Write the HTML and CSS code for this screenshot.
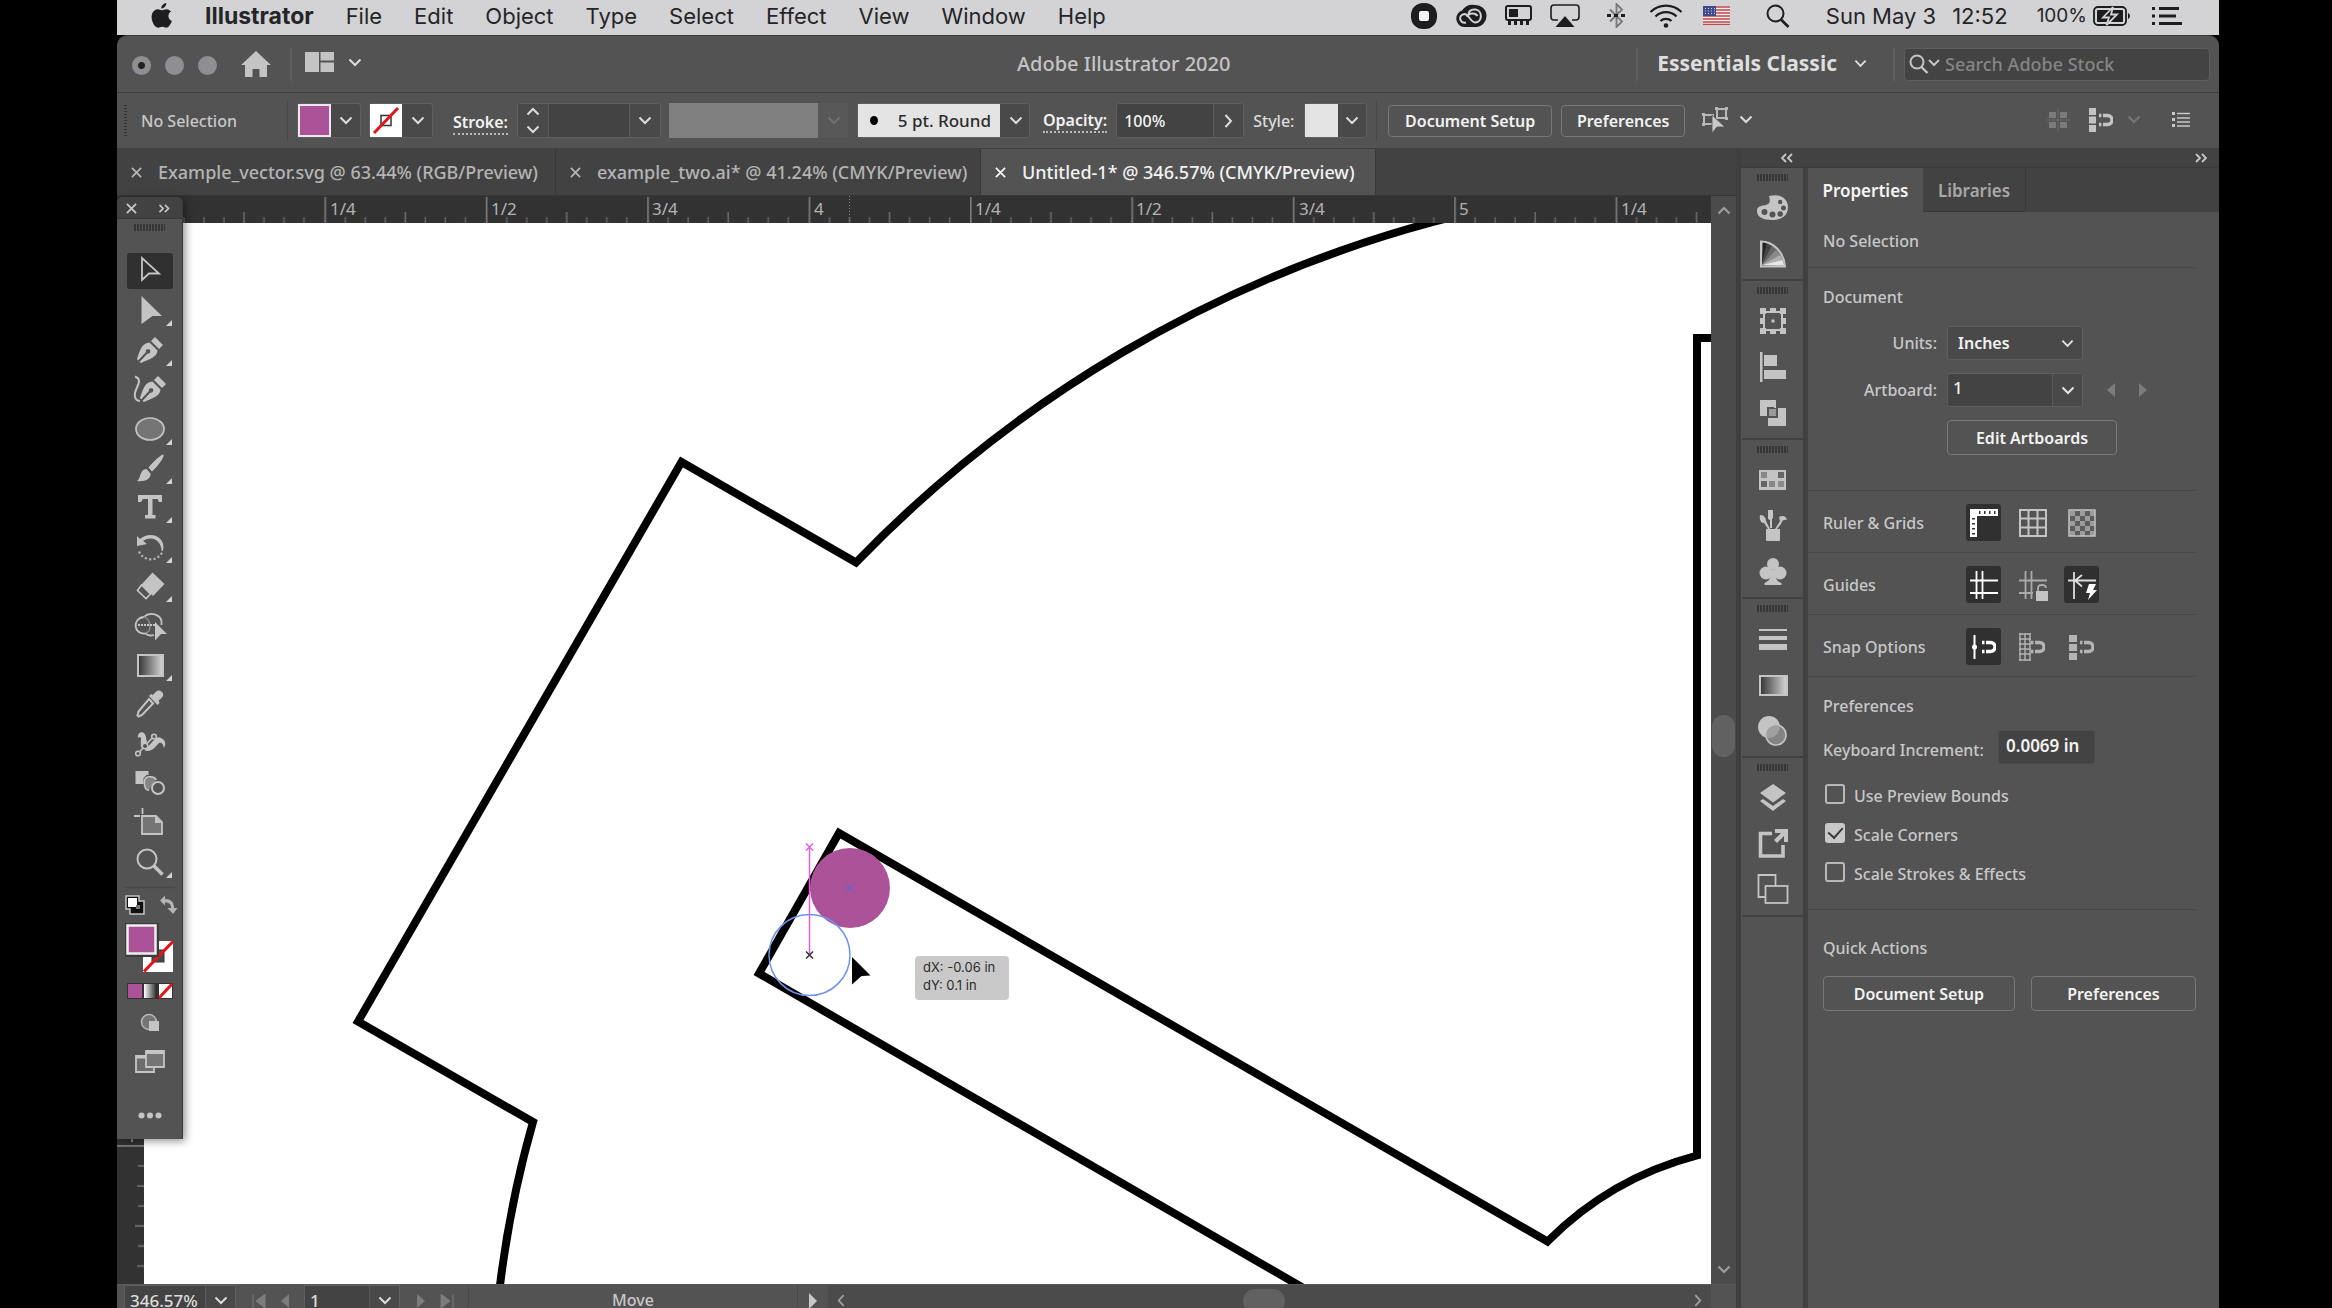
FILE: index.html
```html
<!DOCTYPE html>
<html lang="en">
<head>
<meta charset="utf-8">
<meta name="viewport" content="width=device-width, initial-scale=1">
<title>Adobe Illustrator 2020</title>
<link rel="stylesheet" href="styles.css">
</head>
<body>
<svg class="defs" aria-hidden="true">
  <defs>
    <symbol id="down" viewBox="0 0 14 9"><path d="M1.5 1.5 7 7l5.500-5.500" fill="none" stroke="currentColor" stroke-width="2"/></symbol>
    <symbol id="up" viewBox="0 0 14 9"><path d="M1.500 7.500 7 2l5.500 5.500" fill="none" stroke="currentColor" stroke-width="2"/></symbol>
    <symbol id="right" viewBox="0 0 9 14"><path d="M1.500 1 7 7l-5.500 6" fill="none" stroke="currentColor" stroke-width="2"/></symbol>
    <symbol id="left" viewBox="0 0 9 14"><path d="M7.500 1 2 7l5.500 6" fill="none" stroke="currentColor" stroke-width="2"/></symbol>
    <symbol id="close" viewBox="0 0 12 12"><path d="M1 1l10 10M11 1 1 11" fill="none" stroke="currentColor" stroke-width="2"/></symbol>
    <symbol id="dright" viewBox="0 0 12 10"><path d="M1 1l4 4-4 4M7 1l4 4-4 4" fill="none" stroke="currentColor" stroke-width="1.800"/></symbol>
    <symbol id="dleft" viewBox="0 0 12 10"><path d="M5 1 1 5l4 4M11 1 7 5l4 4" fill="none" stroke="currentColor" stroke-width="1.800"/></symbol>
    <symbol id="corner" viewBox="0 0 6 6"><path d="M6 0v6H0z" fill="currentColor"/></symbol>
    <symbol id="magnet" viewBox="0 0 14 14"><path d="M4 2.500h4.500a4.500 4.500 0 0 1 0 9H4" fill="none" stroke="currentColor" stroke-width="3.400"/><path d="M0 .8h2.500v3.400H0zM0 9.800h2.500v3.400H0z" fill="currentColor"/></symbol>
    <linearGradient id="ramp"><stop offset="0" stop-color="#333"/><stop offset="1" stop-color="#d8d8d8"/></linearGradient>
    <linearGradient id="rampBack"><stop offset="0" stop-color="#fff"/><stop offset="1" stop-color="#222"/></linearGradient>
  </defs>
</svg>

<div class="desktop">
  <header class="menubar">
    <nav class="menus" aria-label="Application menu">
      <button class="apple" aria-label="Apple menu"><svg width="22" height="26" viewBox="0 0 22 26"><path fill="#1d1d1f" d="M15.300 0c.2 2.800-2.500 5.600-5 5.500C10.100 2.800 12.700.3 15.300 0zM11 7.300c1.200 0 2.600-1.200 4.700-1.100 1.700.1 3.400.9 4.300 2.400-4 2.600-3 7.900.9 9.500-1 2.900-3.100 6.500-5.300 6.600-1.700 0-2.200-1-4.300-1s-2.700 1-4.300 1C3.600 24.600.6 18.700.6 14.100.6 9.200 3.700 6.300 6.800 6.200c1.800 0 3.100 1.100 4.200 1.100z"/></svg></button>
      <button class="app-name">Illustrator</button>
      <button>File</button><button>Edit</button><button>Object</button><button>Type</button><button>Select</button><button>Effect</button><button>View</button><button>Window</button><button>Help</button>
    </nav>
    <div class="status-items">
      <svg width="26" height="26" viewBox="0 0 26 26"><rect x="0" y="0" width="26" height="26" rx="12" fill="#1d1d1f"/><rect x="8" y="8" width="10" height="10" rx="2" fill="#f2f2f4"/></svg>
      <svg width="32" height="24" viewBox="0 0 32 24"><path fill="#1d1d1f" d="M20 1a11 11 0 0 1 1 22H9A8.500 8.500 0 0 1 7 6.500 13 13 0 0 1 20 1z"/><path d="M11 18.500c-7 1.500-8-8-1.500-8.500 4 0 6 8 10.500 8.500 7.500 0 8-12 .5-13C15 5 13 8 13.500 11M12 13c2-5 9-4 10.500-1" fill="none" stroke="#d3d3d6" stroke-width="2"/></svg>
      <svg width="27" height="21" viewBox="0 0 27 21"><rect x="1" y="1" width="25" height="14" rx="2" fill="none" stroke="#1d1d1f" stroke-width="2"/><path d="M4 4h9v8H4zM3 16h3v4H3zM9 16h3v4H9zM15 16h3v4h-3zM21 16h3v4h-3z" fill="#1d1d1f"/></svg>
      <svg width="30" height="24" viewBox="0 0 30 24"><path d="M8 16H4a3 3 0 0 1-3-3V4a3 3 0 0 1 3-3h22a3 3 0 0 1 3 3v9a3 3 0 0 1-3 3h-4" fill="none" stroke="#1d1d1f" stroke-width="1.600"/><path d="M15 12l9.500 11h-19z" fill="#1d1d1f"/></svg>
      <svg class="bt" width="18" height="25" viewBox="0 0 18 25"><path d="M3 6.500l12 12L9.500 24V1L15 6.500l-12 12" fill="none" stroke="#77777b" stroke-width="1.800"/><path d="M0 11h4v3H0zM7 11h4v3H7zM14 11h4v3h-4z" fill="#1d1d1f"/></svg>
      <svg class="wifi" width="34" height="24" viewBox="0 0 34 24"><g fill="none" stroke="#1d1d1f" stroke-width="2.200"><path d="M1.500 8a22 22 0 0 1 31 0M6.500 12.500a15 15 0 0 1 21 0M11.500 17a8 8 0 0 1 11 0"/></g><circle cx="17" cy="21.500" r="2.300" fill="#1d1d1f"/></svg>
      <svg class="flag" width="27" height="19" viewBox="0 0 27 19"><path fill="#f3eeee" d="M0 0h27v19H0z"/><path d="M0 1h27M0 4h27M0 7h27M0 10h27M0 13h27M0 16h27M0 18.500h27" stroke="#c0474c" stroke-width="1.500"/><path fill="#3f4a86" d="M0 0h13v10H0z"/><path d="M2 2.500h10M2 5h10M2 7.500h10" stroke="#c9cde2" stroke-dasharray="1 2"/></svg>
      <svg class="spot" width="24" height="24" viewBox="0 0 24 24"><circle cx="9.500" cy="9.500" r="8" fill="none" stroke="#1d1d1f" stroke-width="2"/><path d="M15 15.500l7.500 7.500" stroke="#1d1d1f" stroke-width="2.600"/></svg>
      <time class="clock"><span>Sun May 3</span><span>12:52</span></time>
      <span class="charge">100%</span>
      <svg class="battery" width="38" height="20" viewBox="0 0 38 20"><rect x="1" y="1" width="32" height="18" rx="4" fill="none" stroke="#1d1d1f" stroke-width="1.800"/><rect x="4" y="4" width="26" height="12" rx="1" fill="#1d1d1f"/><path d="M35 7c2.500.5 2.500 5.500 0 6z" fill="#1d1d1f"/><path d="M20 1l-10 10.500h6L13.500 19 24 8.500h-6z" fill="#1d1d1f" stroke="#d3d3d6" stroke-width="1.800"/></svg>
      <svg width="30" height="20" viewBox="0 0 30 20"><path d="M7 2.500h20M7 10h17M7 17.500h23" stroke="#1d1d1f" stroke-width="2.800"/><path d="M0 2.500h3M0 10h3M0 17.500h3" stroke="#1d1d1f" stroke-width="2.800"/></svg>
    </div>
  </header>

  <main class="window">
    <div class="titlebar">
      <div class="lights"><i class="edited"></i><i></i><i></i></div>
      <button class="home" aria-label="Home"><svg width="30" height="26" viewBox="0 0 30 26"><path d="M15 0l15 14h-4v12h-7.500v-8h-7v8H4V14H0z" fill="#c4c4c4"/></svg></button>
      <i class="rule"></i>
      <button class="arrange" aria-label="Arrange documents"><svg width="29" height="20" viewBox="0 0 29 20"><path d="M0 0h14v20H0zM15.500 0H29v8.500H15.500zM15.500 10.500H29V20H15.500z" fill="#c4c4c4"/></svg><svg width="14" height="9"><use href="#down"/></svg></button>
      <h1>Adobe Illustrator 2020</h1>
      <div class="title-right">
        <i class="rule"></i>
        <button class="workspace">Essentials Classic<svg width="13" height="9"><use href="#down"/></svg></button>
        <i class="rule"></i>
        <label class="stock"><svg width="31" height="20" viewBox="0 0 31 20"><circle cx="8" cy="8" r="6.500" fill="none" stroke="#c4c4c4" stroke-width="2"/><path d="M12.500 13l6 6" stroke="#c4c4c4" stroke-width="2.400"/><path d="M20 6l5 5 5-5" fill="none" stroke="#c4c4c4" stroke-width="2"/></svg><input type="text" placeholder="Search Adobe Stock" aria-label="Search Adobe Stock"></label>
      </div>
    </div>

    <div class="controlbar">
      <i class="vgrip"></i>
      <span class="sel-state">No Selection</span>
      <i class="rule dark"></i>
      <button class="swatch fill-swatch" aria-label="Fill"><i></i><svg width="14" height="9"><use href="#down"/></svg></button>
      <button class="swatch stroke-swatch" aria-label="Stroke color"><svg width="32" height="33" viewBox="0 0 32 33"><path fill="#fff" d="M0 0h32v33H0z"/><rect x="11" y="11.500" width="10" height="10" fill="none" stroke="#333" stroke-width="1.500"/><path d="M4 29L28 4" stroke="#e0161b" stroke-width="3"/></svg><svg width="14" height="9"><use href="#down"/></svg></button>
      <label class="link-label stroke-label" for="stroke-w">Stroke:</label>
      <div class="spinner"><button aria-label="Step"><svg width="14" height="9"><use href="#up"/></svg><svg width="14" height="9"><use href="#down"/></svg></button><input id="stroke-w" type="text"><button aria-label="Stroke presets"><svg width="14" height="9"><use href="#down"/></svg></button></div>
      <button class="profile" aria-label="Variable width profile" disabled><i></i><svg width="14" height="9"><use href="#down"/></svg></button>
      <button class="brush"><span>5 pt. Round</span><svg width="14" height="9"><use href="#down"/></svg></button>
      <label class="link-label opacity-label" for="opacity">Opacity:</label>
      <div class="opacity"><input id="opacity" type="text" value="100%"><button aria-label="Opacity slider"><svg width="9" height="14"><use href="#right"/></svg></button></div>
      <span class="style-label">Style:</span>
      <button class="swatch style-swatch" aria-label="Graphic style"><i></i><svg width="14" height="9"><use href="#down"/></svg></button>
      <i class="rule dark style-rule"></i>
      <button class="btn bar-btn">Document Setup</button>
      <button class="btn bar-btn prefs">Preferences</button>
      <button class="similar" aria-label="Select similar"><svg width="27" height="27" viewBox="0 0 27 27"><g fill="none" stroke="#b8b8b8" stroke-width="2"><path d="M15 3h9v9h-9zM2 9h9v9H2z"/></g><path d="M13 1h3v3h-3zM23 1h3v3h-3zM23 11h3v3h-3zM0 7h3v3H0zM0 17h3v3H0z" fill="#b8b8b8"/><path d="M10 9l13 12h-8l-5 6z" fill="#c8c8c8" stroke="#535353" stroke-width=".8"/></svg><svg width="14" height="9"><use href="#down"/></svg></button>
      <div class="bar-end">
        <svg width="24" height="24" viewBox="0 0 24 24"><path d="M3 4h7v6H3zM14 4h7v6h-7zM3 14h7v6H3zM14 14h7v6h-7z" fill="#7b7b7b"/><path d="M12 0v24M0 12h24" stroke="#6b6b6b"/></svg>
        <svg width="24" height="24" viewBox="0 0 24 24"><path d="M0 0h7v7H0zM0 8.500h7v7H0zM0 17h7v7H0z" fill="#c4c4c4"/><use href="#magnet" x="10" y="5" width="14" height="14" color="#c4c4c4"/></svg>
        <svg class="dim" width="14" height="9"><use href="#down"/></svg>
        <svg class="list-ic" width="18" height="15" viewBox="0 0 18 15"><path d="M5 1.500h13M5 6h13M5 10h13M5 14h13" stroke="#c8c8c8" stroke-width="1.600"/><path d="M0 0h3v3H0zM0 6h3v3H0zM0 12h3v3H0z" fill="#c8c8c8"/></svg>
      </div>
    </div>

    <div class="workarea">
      <section class="document">
        <div class="tabs">
          <button class="tab t1"><svg width="11" height="11"><use href="#close"/></svg>Example_vector.svg @ 63.44% (RGB/Preview)</button>
          <button class="tab t2"><svg width="11" height="11"><use href="#close"/></svg>example_two.ai* @ 41.24% (CMYK/Preview)</button>
          <button class="tab t3 active"><svg width="11" height="11"><use href="#close"/></svg>Untitled-1* @ 346.57% (CMYK/Preview)</button>
        </div>
        <div class="stage">
          <div class="sheet">
            <svg class="hruler" width="100%" height="27">
              <defs><pattern id="hticks" x="46" width="161.400" height="27" patternUnits="userSpaceOnUse"><path d="M.8 1v26" stroke="#7c7c7c" stroke-width="1.600"/><path d="M21 21v6M41 21v6M61 21v6M101 21v6M121 21v6M141 21v6" stroke="#626262" stroke-width="1.500"/><path d="M81 16v11" stroke="#6c6c6c" stroke-width="1.500"/></pattern></defs>
              <rect width="100%" height="27" fill="url(#hticks)"/>
              <path d="M732.500 0v27" stroke="#8a8a8a" stroke-dasharray="1 2"/>
              <g><text x="213" y="19">1/4</text><text x="374" y="19">1/2</text><text x="535" y="19">3/4</text><text x="697" y="19">4</text><text x="858" y="19">1/4</text><text x="1019" y="19">1/2</text><text x="1182" y="19">3/4</text><text x="1342" y="19">5</text><text x="1504" y="19">1/4</text></g>
            </svg>
            <svg class="vruler" width="27" height="100%">
              <defs><pattern id="vticks" y="115" width="27" height="161.400" patternUnits="userSpaceOnUse"><path d="M0 .8h27" stroke="#7c7c7c" stroke-width="2"/><path d="M21 21h6M20 41h7M21 61h6M21 101h6M20 121h7M21 141h6" stroke="#727272" stroke-width="1.500"/><path d="M18 81h9" stroke="#7c7c7c" stroke-width="1.500"/></pattern></defs>
              <rect width="27" height="100%" fill="url(#vticks)"/>
              <path d="M15 912v7" stroke="#aaa" stroke-width="1.500"/>
            </svg>
            <svg class="artboard" width="100%" height="100%">
              <g transform="translate(-144 -223)">
                <g fill="none" stroke="#000" stroke-width="8">
                  <path d="M1483 209l-50 13A1256 1256 0 0 0 856 562.500L681.500 462 358 1021.500 533 1122Q509 1206 499 1294"/>
                  <path d="M1730 338h-33v817.500A328 328 0 0 0 1547.500 1241.500L839 833 759 973.500l560 323.500"/>
                </g>
                <circle cx="850" cy="888" r="40" fill="#ab5298"/>
                <path d="M846 884l8 8M854 884l-8 8" stroke="#6b62c8" stroke-width="1.300"/>
                <circle cx="809.500" cy="955" r="40.500" fill="none" stroke="#6d94ea" stroke-width="1.500"/>
                <path d="M809.500 847v108" stroke="#e05fdf" stroke-width="1.500"/>
                <path d="M806 843.500l7 7M813 843.500l-7 7" stroke="#e65fe6" stroke-width="1.500"/>
                <path d="M806 951.500l7 7M813 951.500l-7 7" stroke="#333" stroke-width="1.500"/>
                <path d="M852 957l18.500 18.500-9 .5-9.500 8.500z" fill="#000"/>
              </g>
            </svg>
            <div class="measure">dX: -0.06 in<br>dY: 0.1 in</div>
          </div>
          <div class="vscroll"><svg width="14" height="9"><use href="#up"/></svg><i></i><svg width="14" height="9"><use href="#down"/></svg></div>
        </div>
        <div class="statusbar">
          <div class="combo zoom"><input type="text" value="346.57%" aria-label="Zoom"><button aria-label="Zoom levels"><svg width="14" height="9"><use href="#down"/></svg></button></div>
          <div class="nav"><button disabled aria-label="First"><svg width="14" height="14" viewBox="0 0 14 14"><path d="M1 0v14M13 0v14L4 7z" fill="#7c7c7c" stroke="#7c7c7c" stroke-width="1"/></svg></button><button disabled aria-label="Previous"><svg width="8" height="14"><path d="M8 0v14L0 7z" fill="#7c7c7c"/></svg></button></div>
          <div class="combo board"><input type="text" value="1" aria-label="Artboard number"><button aria-label="Artboards"><svg width="14" height="9"><use href="#down"/></svg></button></div>
          <div class="nav next"><button disabled aria-label="Next"><svg width="8" height="14"><path d="M0 0v14l8-7z" fill="#7c7c7c"/></svg></button><button disabled aria-label="Last"><svg width="14" height="14" viewBox="0 0 14 14"><path d="M13 0v14M1 0v14l9-7z" fill="#7c7c7c" stroke="#7c7c7c" stroke-width="1"/></svg></button></div>
          <span class="tool-name">Move</span>
          <button class="play" aria-label="Status menu"><svg width="8" height="16"><path d="M0 0v16l8-8z" fill="#c8c8c8"/></svg></button>
          <div class="hscroll"><svg width="8" height="13"><use href="#left"/></svg><i></i><svg width="8" height="13"><use href="#right"/></svg></div>
          <i class="scroll-corner"></i>
        </div>

        <aside class="toolbox" aria-label="Tools">
          <div class="toolbox-head"><svg width="11" height="11"><use href="#close"/></svg><svg width="12" height="9"><use href="#dright"/></svg></div>
          <i class="hgrip"></i>
          <div class="tools">
            <button class="on" aria-label="Selection"><svg viewBox="0 0 46 36"><path d="M15 5v22l7-6.500h10z" fill="none" stroke="#c4c4c4" stroke-width="1.800"/></svg></button>
            <button aria-label="Direct Selection"><svg viewBox="0 0 46 36"><path d="M14.500 4L35 24h-9.500l-11 8z" fill="#c4c4c4"/><use href="#corner" x="39" y="28" width="6" height="6"/></svg></button>
            <button aria-label="Pen"><svg viewBox="0 0 46 36"><path d="M28 5l8 8-4 4-8-8zM22.500 10.500l8 8C30 25 23 27 14 31l-1.500-1 8-8.500a2.200 2.200 0 1 0-1.500-1.500l-8 8.500-1-1.500C13 18 15 11 22.500 10.500z" fill="#c4c4c4"/><use href="#corner" x="39" y="28" width="6" height="6"/></svg></button>
            <button aria-label="Curvature"><svg viewBox="0 0 46 36"><path d="M31 5l8 8-4 4-8-8zM25.500 10.500l8 8C33 25 26 27 17 31l-1.500-1 8-8.500a2.200 2.200 0 1 0-1.500-1.500l-8 8.500-1-1.500C16 18 18 11 25.500 10.500z" fill="#c4c4c4"/><path d="M8 5.500c5 2 5 5 2 11-3.500 7-3 13 3 13.500" fill="none" stroke="#c4c4c4" stroke-width="2"/></svg></button>
            <button aria-label="Ellipse"><svg viewBox="0 0 46 36"><ellipse cx="23" cy="18" rx="14" ry="11" fill="#757575" stroke="#c4c4c4" stroke-width="1.700"/><use href="#corner" x="39" y="28" width="6" height="6"/></svg></button>
            <button aria-label="Paintbrush"><svg viewBox="0 0 46 36"><path d="M36.500 4.500c1 3-6 12-11.500 17l-3.500-4C27 11 34 4.500 36.500 4.500zM19.500 19l4 4.500c1 6-7 8.500-13.500 7.500 4-2 2.500-12 9.500-12z" fill="#c4c4c4"/><use href="#corner" x="39" y="28" width="6" height="6"/></svg></button>
            <button aria-label="Type"><svg viewBox="0 0 46 36"><path d="M11 6h24v7h-3l-1.500-3h-5v16h3v3.500h-10.500V26h3V10h-5L14 13h-3z" fill="#c4c4c4"/><use href="#corner" x="39" y="28" width="6" height="6"/></svg></button>
            <button aria-label="Rotate"><svg viewBox="0 0 46 36"><path d="M10 7l3 3c9-8 24-4 23.500 9l-.8 3h-1C34 12 26 6 16 12l4 3-10 2z" fill="#c4c4c4"/><path d="M12 22.500c4 9.500 18 11 23 1" fill="none" stroke="#b4b4b4" stroke-width="2.200" stroke-dasharray="2.200 2.200"/><use href="#corner" x="39" y="28" width="6" height="6"/></svg></button>
            <button aria-label="Eraser"><svg viewBox="0 0 46 36"><path d="M25.500 4.500L37.500 16 26 28 14.500 16.500z" fill="#c4c4c4"/><path d="M14.500 17l9 9-4.500 4.500-8.500-8z" fill="none" stroke="#c4c4c4" stroke-width="1.700"/><use href="#corner" x="39" y="28" width="6" height="6"/></svg></button>
            <button aria-label="Shape Builder"><svg viewBox="0 0 46 36"><path d="M27 28c-4 1-7 0-8-1.500C6 28 5 11 17 10c6-6 19-3 17.500 8" fill="none" stroke="#c4c4c4" stroke-width="1.800"/><path d="M17 10c7 2 8 14 2 16" fill="none" stroke="#888" stroke-width="1.500"/><path d="M11 18h17" stroke="#c4c4c4" stroke-width="1.800" stroke-dasharray="2 1"/><path d="M28 15l12 12h-6l-6 6.500z" fill="#c4c4c4"/></svg></button>
            <button aria-label="Gradient"><svg viewBox="0 0 46 36"><rect x="11" y="8" width="25" height="21" fill="url(#ramp)" stroke="#c4c4c4" stroke-width="2"/><use href="#corner" x="39" y="28" width="6" height="6"/></svg></button>
            <button aria-label="Eyedropper"><svg viewBox="0 0 46 36"><path d="M22 13l4 4.500L15 29l-3.500 1.500-1-1 1-4z" fill="none" stroke="#c4c4c4" stroke-width="2"/><path d="M22 10l2-2 2 1c4-6 7-5 9-3s2 5-3.500 8.500l1 2.500-2 2z" fill="#c4c4c4"/></svg></button>
            <button aria-label="Puppet Warp"><svg viewBox="0 0 46 36"><path d="M11 12c-1-7 7-8 8-1 0 4 2 7 5 5 4-3 6-6 10-4 5 2 5 7 3 10-1-5-3-6-5-5-3 3-6 8-12 8-8-1-6-8-6-12 0-2-1-3-3-1z" fill="#c4c4c4"/><path d="M12 27l7-7 8-9" stroke="#535353" stroke-width="4"/><path d="M12 26.500L26 11" stroke="#c4c4c4" stroke-width="1.600"/><g fill="#535353" stroke="#c4c4c4" stroke-width="1.600"><circle cx="11" cy="27.500" r="2.300"/><circle cx="18" cy="20" r="2.800"/><circle cx="27" cy="10.500" r="2.300"/></g></svg></button>
            <button aria-label="Blend"><svg viewBox="0 0 46 36"><path d="M8.500 6h13v4h-2l-3 3v6h-8z" fill="#c4c4c4"/><path d="M29 15c0-3-9-5-11-1s0 12 4 11" fill="#858585" stroke="#c4c4c4" stroke-width="1.600"/><circle cx="31" cy="23" r="6" fill="#535353" stroke="#c4c4c4" stroke-width="2"/></svg></button>
            <button aria-label="Artboard"><svg viewBox="0 0 46 36"><path d="M15 12h14l6 6v12H15z" fill="#757575" stroke="#c4c4c4" stroke-width="1.800"/><path d="M28 12v7h7z" fill="#c4c4c4"/><path d="M15.500 4v6M7 12h6" stroke="#c4c4c4" stroke-width="1.800"/></svg></button>
            <button aria-label="Zoom"><svg viewBox="0 0 46 36"><circle cx="20" cy="15" r="9.500" fill="none" stroke="#c4c4c4" stroke-width="2"/><path d="M26.500 21.500L35.500 30.500" stroke="#c4c4c4" stroke-width="3.500"/><use href="#corner" x="39" y="28" width="6" height="6"/></svg></button>
          </div>
          <svg class="paint" width="64" height="250" viewBox="0 0 64 250" aria-label="Fill and stroke">
            <path d="M7 4.500h50" stroke="#484848" stroke-width="1.500"/>
            <path d="M8 13h13v5h5v13H12v-5H8z" fill="#111" stroke="#c4c4c4" stroke-width="1.500"/><path d="M10 15h9v9h-9z" fill="#fff"/><path d="M18 22h4v4h-4z" fill="#777"/>
            <path d="M42 17.500l5-5v3.500c6 0 9 3 9 9h3.500L55 31l-5.500-6H53c0-4-2-5.500-6-5.500v3z" fill="#b4b4b4"/>
            <rect x="25" y="58" width="30" height="31" fill="#fff"/><rect x="34" y="67" width="12" height="12" fill="#4a4a4a" stroke="#333"/><path d="M26 88.500L55 58.500" stroke="#e0161b" stroke-width="3.200"/>
            <rect x="9" y="42" width="30" height="30" fill="#ab5298" stroke="#3c3c3c" stroke-width="4"/><rect x="9.500" y="42.500" width="28" height="28" fill="#ab5298" stroke="#eee" stroke-width="2.500"/>
            <path d="M9 100h46v16H9z" fill="#333"/><path d="M10 101h14v14H10z" fill="#ab5298"/><path d="M26 101h13v14H26z" fill="url(#rampBack)"/><path d="M41 101h13v14H41z" fill="#fff"/><path d="M41 115l13-14" stroke="#e0161b" stroke-width="3"/>
            <circle cx="31" cy="139" r="7.500" fill="#757575" stroke="#b4b4b4" stroke-width="1.600"/><path d="M31 138h10v10H31z" fill="#c4c4c4"/>
            <path d="M18 173h18v16H18z" fill="#6c6c6c" stroke="#c4c4c4" stroke-width="1.800"/><path d="M18 174h18" stroke="#c4c4c4" stroke-width="3"/><path d="M28 168h18v16H28z" fill="#757575" stroke="#c4c4c4" stroke-width="1.800"/><path d="M28 169.500h18" stroke="#c4c4c4" stroke-width="3"/>
            <g fill="#c4c4c4"><circle cx="23.500" cy="232.500" r="3"/><circle cx="32" cy="232.500" r="3"/><circle cx="40.500" cy="232.500" r="3"/></g>
          </svg>
        </aside>
      </section>

      <section class="dock">
        <div class="dock-head"><svg width="12" height="10"><use href="#dleft"/></svg><svg width="12" height="10"><use href="#dright"/></svg></div>
        <div class="dock-body">
          <nav class="icons" aria-label="Panels">
            <div class="group"><i class="hgrip"></i>
              <button aria-label="Color"><svg viewBox="0 0 32 32"><path fill="#c4c4c4" fill-rule="evenodd" d="M12 4c10-3 19 2 19 11S24 28 15 28 0 25 0 19s6-5 9-6 5-2 3-9zM4.500 20a3 3 0 1 0 6 0 3 3 0 1 0-6 0zm8 2.500a3 3 0 1 0 6 0 3 3 0 1 0-6 0zm8-.5a2.700 2.700 0 1 0 5.400 0 2.700 2.700 0 1 0-5.400 0zM24 16a2.500 2.500 0 1 0 5 0 2.500 2.500 0 1 0-5 0zm-3-6a2.200 2.200 0 1 0 4.400 0 2.200 2.200 0 1 0-4.400 0z"/></svg></button>
              <button aria-label="Color Guide"><svg viewBox="0 0 32 32"><path d="M4 3.500C16 3.500 27 14 28 28.500H4z" fill="#777" stroke="#c4c4c4" stroke-width="2"/><path d="M5 27L6 4.500l4 1z" fill="#222"/><path d="M5 27L10 5.500l5 2.500z" fill="#444"/><path d="M5 27L15 8l4 4z" fill="#666"/><path d="M5 27L19 12l4 5z" fill="#8a8a8a"/><path d="M5 27l18-10 2.500 5z" fill="#b0b0b0"/><path d="M5 27l20.500-5 1.500 5.500z" fill="#e8e8e8"/></svg></button></div>
            <div class="group"><i class="hgrip"></i>
              <button aria-label="Transform"><svg viewBox="0 0 32 32"><rect x="7" y="7" width="18" height="18" fill="none" stroke="#c4c4c4" stroke-width="2"/><path d="M3 3h6v6H3zM13 3h6v5h-6zM23 3h6v6h-6zM3 13h5v6H3zM24 13h5v6h-5zM3 23h6v6H3zM13 24h6v5h-6zM23 23h6v6h-6zM14.500 14.500h3v3h-3z" fill="#c4c4c4"/></svg></button>
              <button aria-label="Align"><svg viewBox="0 0 32 32"><path d="M3 1h2.500v30H3zM7 4h13v11H7zM7 19h22v9H7z" fill="#c4c4c4"/></svg></button>
              <button aria-label="Pathfinder"><svg viewBox="0 0 32 32"><path d="M3 3h16v8h-2V10h-7v9H3zM21 11h8v18H11v-8h10z" fill="#c4c4c4"/><path d="M12 12h7v7h-7z" fill="#999"/></svg></button></div>
            <div class="group"><i class="hgrip"></i>
              <button aria-label="Swatches"><svg viewBox="0 0 32 32"><path d="M2 6h27v20H2z" fill="#c4c4c4"/><path d="M4 8h6v6H4zM12 17h6v6h-6z" fill="#888"/><path d="M21 8h6v6h-6zM4 17h6v6H4z" fill="#666"/><path d="M21 17h6v6h-6z" fill="#8c8c8c"/></svg></button>
              <button aria-label="Brushes"><svg viewBox="0 0 32 32"><path d="M9 19h14v11q0 1-1 1H10q-1 0-1-1zM11 0h5v8l-1 1v9h-2v-8l-2-1zM3 5c4 0 6 3 6 6l4 8h-2l-4-6C4 13 2 10 3 5zM22 7c4-2 7-1 8 3-3-1-5 0-6 4l-4 5h-2l5-8z" fill="#c4c4c4"/></svg></button>
              <button aria-label="Symbols"><svg viewBox="0 0 32 32"><circle cx="16" cy="8" r="6" fill="#c4c4c4"/><circle cx="9" cy="17" r="6.500" fill="#c4c4c4"/><circle cx="23" cy="17" r="6.500" fill="#c4c4c4"/><path d="M14.500 14h3q0 11 7 13v2h-17v-2q7-2 7-13z" fill="#c4c4c4"/></svg></button></div>
            <div class="group"><i class="hgrip"></i>
              <button aria-label="Stroke"><svg viewBox="0 0 32 32"><path d="M2 6h28v2H2zM2 13h28v4H2zM2 21h28v6H2z" fill="#c4c4c4"/></svg></button>
              <button aria-label="Gradient"><svg viewBox="0 0 32 32"><rect x="3" y="7" width="27" height="19" fill="url(#ramp)" stroke="#c4c4c4" stroke-width="2"/></svg></button>
              <button aria-label="Transparency"><svg viewBox="0 0 32 32"><circle cx="12" cy="12" r="11" fill="#c4c4c4"/><circle cx="19" cy="20" r="10" fill="#838383" stroke="#c4c4c4" stroke-width="1.600"/><path d="M9.500 17a10 10 0 0 1 13-6 11 11 0 0 1-12.500 12 10 10 0 0 1-.5-6z" fill="#a0a0a0"/></svg></button></div>
            <div class="group"><i class="hgrip"></i>
              <button aria-label="Layers"><svg viewBox="0 0 32 32"><path d="M16 2l13 9-13 9.500L3 11zM3 19l3-2 10 7 10-7 3 2-13 10z" fill="#c4c4c4"/></svg></button>
              <button aria-label="Asset Export"><svg viewBox="0 0 32 32"><path d="M15 5.500H3.500v22.500h22.500V17" fill="none" stroke="#c4c4c4" stroke-width="3.600"/><path d="M18 1h13v13h-4V8l-7 7-3-3 7-7h-6z" fill="#c4c4c4"/></svg></button>
              <button aria-label="Artboards"><svg viewBox="0 0 32 32"><path d="M8 23H1.500V1h17v11" fill="none" stroke="#c4c4c4" stroke-width="1.800"/><rect x="8.500" y="12" width="22" height="17" fill="none" stroke="#c4c4c4" stroke-width="1.800"/></svg></button></div>
          </nav>

          <aside class="properties">
            <div class="ptabs"><button class="active">Properties</button><button>Libraries</button></div>
            <form class="panel">
              <p class="state">No Selection</p>
              <section class="doc-sec">
                <h2>Document</h2>
                <div class="field units"><label for="units">Units:</label><span class="select"><select id="units"><option>Inches</option></select><svg width="13" height="9"><use href="#down"/></svg></span></div>
                <div class="field ab"><label for="ab">Artboard:</label><span class="combo pcombo"><input id="ab" type="text" value="1"><button type="button" aria-label="Choose artboard"><svg width="14" height="9"><use href="#down"/></svg></button></span><button type="button" class="step" disabled aria-label="Previous artboard"><svg width="8" height="14"><path d="M8 0v14L0 7z" fill="#7c7c7c"/></svg></button><button type="button" class="step" disabled aria-label="Next artboard"><svg width="8" height="14"><path d="M0 0v14l8-7z" fill="#7c7c7c"/></svg></button></div>
                <button type="button" class="btn edit">Edit Artboards</button>
              </section>
              <section class="row"><h2>Ruler &amp; Grids</h2>
                <button type="button" class="on" aria-label="Show rulers"><svg viewBox="0 0 28 28"><path d="M0 0h28v7H7v21H0z" fill="#fff"/><path d="M9 3.500h18" stroke="#333" stroke-width="3" stroke-dasharray="1.500 3.500"/><path d="M3.500 9v18" stroke="#333" stroke-width="3" stroke-dasharray="1.500 3.500"/></svg></button>
                <button type="button" aria-label="Show grid"><svg viewBox="0 0 28 28"><path d="M1 1h26v26H1zM9.500 1v26M18.500 1v26M1 9.500h26M1 18.500h26" fill="none" stroke="#c4c4c4" stroke-width="2"/></svg></button>
                <button type="button" aria-label="Show transparency grid"><svg viewBox="0 0 28 28"><defs><pattern id="chk" width="10" height="10" x="2" y="2" patternUnits="userSpaceOnUse"><path d="M0 0h5v5H0zM5 5h5v5H5z" fill="#9c9c9c"/></pattern></defs><rect x="1" y="1" width="26" height="26" fill="#5c5c5c"/><rect x="1" y="1" width="26" height="26" fill="url(#chk)" stroke="#c4c4c4" stroke-width="1.500"/></svg></button></section>
              <section class="row"><h2>Guides</h2>
                <button type="button" class="on" aria-label="Show guides"><svg viewBox="0 0 28 28"><path d="M6.500 0v28M12.500 0v28M0 9.500h28M0 22h28" stroke="#fff" stroke-width="1.800"/></svg></button>
                <button type="button" aria-label="Lock guides"><svg viewBox="0 0 28 28"><path d="M6.500 0v28M12.500 0v28M0 9.500h28M0 22h14" stroke="#aaa" stroke-width="1.800"/><path d="M17 20h12v10H17z" fill="#c4c4c4"/><path d="M19 20v-3q0-3 4-3t4 3" fill="none" stroke="#aaa" stroke-width="1.800"/></svg></button>
                <button type="button" class="on" aria-label="Smart guides"><svg viewBox="0 0 28 28"><path d="M6 1v27M0 9.500h28M14 4L7 9.500l7 6" fill="none" stroke="#ddd" stroke-width="1.800"/><path d="M21 13h7l-3 6h4L20 29l2-7h-4z" fill="#fff"/></svg></button></section>
              <section class="row"><h2>Snap Options</h2>
                <button type="button" class="on" aria-label="Snap to point"><svg viewBox="0 0 28 28"><path d="M4.500 2v24" stroke="#fff" stroke-width="2"/><circle cx="4.500" cy="14" r="2.500" fill="#fff"/><use href="#magnet" x="12" y="7" width="14" height="14" color="#fff"/></svg></button>
                <button type="button" aria-label="Snap to grid"><svg viewBox="0 0 28 28"><path d="M1 0v28M6 0v28M11 0v28M0 1h12M0 6h12M0 11h12M0 16h12M0 21h12M0 27h12" stroke="#b4b4b4" stroke-width="1.400"/><use href="#magnet" x="12" y="7" width="14" height="14" color="#b4b4b4"/></svg></button>
                <button type="button" aria-label="Snap to pixel"><svg viewBox="0 0 28 28"><path d="M1 2h8v7H1zM1 11h8v7H1zM1 20h8v7H1z" fill="#b4b4b4"/><use href="#magnet" x="12" y="7" width="14" height="14" color="#b4b4b4"/></svg></button></section>
              <section class="pref-sec">
                <h2>Preferences</h2>
                <div class="increment"><label for="inc">Keyboard Increment:</label><input id="inc" type="text" value="0.0069 in"></div>
                <label class="check"><input type="checkbox">Use Preview Bounds</label>
                <label class="check"><input type="checkbox" checked>Scale Corners</label>
                <label class="check"><input type="checkbox">Scale Strokes &amp; Effects</label>
              </section>
              <section class="quick">
                <h2>Quick Actions</h2>
                <div class="quick-btns"><button type="button" class="btn">Document Setup</button><button type="button" class="btn">Preferences</button></div>
              </section>
            </form>
          </aside>
        </div>
      </section>
    </div>
  </main>
</div>
</body>
</html>
```

FILE: styles.css
```css
* { box-sizing: border-box; }
body, h1, h2, p { margin: 0; font-weight: inherit; }
h2 { font-size: inherit; }
body { background: #000; color: #c8c8c8; font: 500 16px/24px "Noto Sans", sans-serif; overflow: hidden; }
button, input, select { font: inherit; color: inherit; background: none; border: 0; border-radius: 0; padding: 0; margin: 0; min-width: 0; }
svg { display: block; flex: none; }
i { display: block; flex: none; }
.defs { position: absolute; width: 0; height: 0; }
button { display: flex; align-items: center; justify-content: center; flex: none; white-space: nowrap; }

.desktop { height: 100vh; padding: 0 113px 0 117px; display: flex; flex-direction: column; overflow: hidden; }

/* System menu bar */
.menubar { height: 35px; flex: none; background: #d3d3d6; color: #252527; display: flex; justify-content: space-between; align-items: center; padding: 0 37px 4px 34px; font: 400 22px/28px Inter, sans-serif; }
.menus { display: flex; gap: 32px; align-items: center; }
.app-name { font-size: 23px; font-weight: 700; }
.status-items { display: flex; align-items: center; gap: 18px; }
.bt { margin-left: 9px; }
.wifi { margin-left: 6px; }
.flag { margin-left: 2px; }
.spot { margin: 0 18px; }
.clock { display: flex; gap: 16px; }
.charge { font-size: 19px; margin: 0 -12px 0 11px; }
.battery { margin-right: 3px; }

.window { flex: 1; min-height: 0; display: flex; flex-direction: column; background: #535353; border-top: 1px solid #3a3a3a; border-radius: 10px 10px 0 0; overflow: hidden; }
.rule { width: 2px; height: 33px; background: #5f5f5f; }
.rule.dark { width: 1px; height: 40px; background: #484848; }

/* Title bar */
.titlebar { height: 57px; flex: none; display: flex; align-items: center; border-bottom: 1px solid #3f3f3f; padding: 0 9px 0 15px; }
.lights { display: flex; gap: 14px; padding-top: 2px; }
.lights i { width: 19px; height: 19px; border-radius: 50%; background: #8e8e93; }
.lights .edited { background: radial-gradient(circle, #222 0 3px, #8e8e93 4px); }
.home { margin: 0 19px 0 24px; }
.arrange { gap: 14px; margin: 0 0 4px 13px; color: #dcdcdc; }
h1 { font-size: 20px; font-weight: 500; line-height: 28px; color: #c4c4c4; }
.title-right { flex: 1; display: flex; align-items: center; justify-content: flex-end; }
.titlebar h1 { margin-left: 655px; }
.workspace { font-size: 21px; font-weight: 700; color: #dedede; margin: 0 26px 2px 19px; gap: 17px; }
.stock { width: 306px; height: 33px; margin-left: 9px; background: #434343; border: 1px solid #5e5e5e; border-radius: 4px; display: flex; align-items: center; padding: 0 4px; gap: 5px; }
.stock input { flex: 1; font-size: 18px; font-weight: 500; }
.stock input::placeholder { color: #858585; opacity: 1; }

/* Control bar */
.controlbar { height: 56px; flex: none; display: flex; align-items: center; border-bottom: 1px solid #3f3f3f; padding: 0 29px 0 7px; color: #dcdcdc; }
.vgrip { width: 3px; height: 31px; background: repeating-linear-gradient(#333 0 1px, transparent 1px 3px); }
.sel-state { width: 147px; padding-left: 14px; color: #c8c8c8; }
.sel-state + .rule { margin: 0 9px 0 13px; }
.swatch { height: 35px; width: 64px; justify-content: space-between; border: 1px solid #5f5f5f; border-radius: 3px; background: #494949; padding-right: 7px; margin-right: 8px; }
.swatch i { width: 33px; height: 33px; background: #ab5298; border: 2px solid #efe6ee; }
.link-label { font-size: 16px; font-weight: 600; color: #f2f2f2; line-height: 22px; border-bottom: 2px dotted #b8b8b8; }
.stroke-label { margin: 4px 9px 0 12px; }
.spinner, .opacity, .combo { display: flex; border: 1px solid #5f5f5f; border-radius: 3px; background: #434343; height: 35px; }
.spinner { width: 144px; }
.spinner input { flex: 1; border: solid #5a5a5a; border-width: 0 1px; }
.spinner button { width: 30px; background: #494949; flex-direction: column; gap: 9px; }
.profile { width: 179px; height: 35px; margin: 0 9px 0 8px; justify-content: flex-start; gap: 9px; background: linear-gradient(90deg, #808080 149px, #585858 149px); color: #717171; }
.profile i { width: 149px; height: 35px; }
.brush { width: 173px; height: 35px; border: 1px solid #5f5f5f; border-radius: 3px; background: #494949; justify-content: flex-start; gap: 9px; }
.brush span { width: 142px; height: 33px; background: #e4e4e4; color: #2c2c2c; padding: 0 9px 0 12px; font-size: 17px; display: flex; align-items: center; justify-content: space-between; }
.brush span::before { content: ""; width: 8px; height: 9px; border-radius: 50%; background: #000; }
.opacity-label { margin: 1px 9px 0 13px; }
.opacity { width: 128px; }
.opacity input { flex: 1; padding: 0 7px; color: #f4f4f4; }
.opacity button { width: 30px; border-left: 1px solid #5a5a5a; background: #494949; }
.style-label { margin: 0 9px; width: 42px; }
.swatch.style-swatch { width: 63px; margin-right: 9px; }
.style-swatch i { background: #e4e4e4; border: 0; }
.btn { border: 1px solid #777; border-radius: 4px; font-size: 16px; font-weight: 600; color: #f2f2f2; height: 35px; }
.bar-btn { width: 164px; height: 32px; margin-left: 11px; }
.bar-btn.prefs { width: 124px; margin-left: 9px; }
.similar { margin: 0 0 2px 17px; gap: 10px; }
.bar-end { margin: 0 0 2px auto; display: flex; align-items: center; gap: 19px; }
.bar-end .dim { color: #777; margin-left: -5px; }
.list-ic { margin-left: 12px; }

/* Work area */
.workarea { flex: 1; min-height: 0; display: flex; background: #3f3f3f; gap: 5px; }
.document { flex: 1; min-width: 0; display: flex; flex-direction: column; position: relative; background: #535353; }
.tabs { height: 47px; flex: none; display: flex; background: #424242; border-bottom: 1px solid #383838; }
.tab { font-size: 18px; font-weight: 500; color: #b4b4b4; gap: 16px; border-right: 1px solid #383838; padding-left: 14px; justify-content: flex-start; }
.tab.t1 { width: 439px; }
.tab.t2 { width: 425px; }
.tab.t3 { width: 395px; }
.tab.active { background: #535353; color: #f2f2f2; }
.stage { flex: 1; min-height: 0; display: flex; }
.sheet { flex: 1; min-width: 0; display: grid; grid-template: 27px 1fr / 27px 1fr; position: relative; overflow: hidden; }
.hruler { grid-column: 1 / 3; background: #323232; }
.hruler text { font: 400 17px "Noto Sans", sans-serif; fill: #b4b4b4; }
.vruler { background: #323232; height: 100%; }
.artboard { background: #fff; min-height: 0; }
.measure { position: absolute; left: 798px; top: 760px; width: 94px; height: 44px; border-radius: 4px; background: #c9c9c9; color: #2c2c2c; font: 400 13px/18px Inter, sans-serif; padding: 2px 8px; }
.vscroll { width: 25px; background: #4b4b4b; color: #a0a0a0; display: flex; flex-direction: column; align-items: center; justify-content: space-between; padding: 10px 0; }
.vscroll i { width: 23px; height: 42px; border-radius: 12px; background: #616161; margin-bottom: 8px; }

.statusbar { height: 24px; flex: none; display: flex; align-items: flex-start; background: #535353; border-top: 1px solid #5a5a5a; overflow: hidden; padding-left: 7px; color: #dcdcdc; }
.statusbar > * { height: 31px; flex: none; align-items: center; }
.statusbar .combo { border-radius: 0; font-size: 17px; }
.statusbar .combo > * { height: 100%; }
.combo button { width: 30px; background: #494949; border-left: 1px solid #5a5a5a; }
.combo input { flex: 1; padding: 0 5px; }
.zoom { width: 112px; }
.board { width: 96px; }
.nav { display: flex; gap: 15px; width: 68px; justify-content: center; }
.nav.next { justify-content: flex-end; padding-right: 14px; }
.tool-name { width: 330px; text-align: center; line-height: 31px; border: solid #484848; border-width: 0 1px; color: #c8c8c8; }
.play { width: 30px; }
.statusbar .hscroll { flex: 1; background: #4b4b4b; color: #a0a0a0; display: flex; justify-content: space-between; padding: 0 9px; }
.hscroll i { width: 42px; height: 24px; border-radius: 12px; background: #616161; margin-right: 11px; }
.scroll-corner { width: 25px; }

/* Floating tool palette */
.toolbox { position: absolute; left: 0; top: 48px; width: 66px; height: 942px; background: #535353; border-right: 1px solid #3c3c3c; border-radius: 6px 6px 0 0; box-shadow: 2px 2px 8px rgb(0 0 0 / 45%); display: flex; flex-direction: column; align-items: center; }
.toolbox-head { height: 22px; width: 100%; background: #424242; border-bottom: 1px solid #383838; border-radius: 6px 6px 0 0; display: flex; align-items: center; justify-content: space-between; padding: 2px 12px 0 9px; }
.hgrip { width: 31px; height: 7px; background: repeating-linear-gradient(90deg, #363636 0 2px, transparent 2px 3px); }
.toolbox .hgrip { margin-top: 5px; }
.tools { margin-top: 22px; height: 630px; display: grid; grid-template-rows: repeat(16, 1fr); }
.tools button { width: 46px; height: 36px; border-radius: 3px; color: #d4d4d4; }
.tools svg { width: 46px; height: 36px; }
.tools .on { background: #303030; }

/* Right dock */
.dock { flex: none; width: 478px; display: flex; flex-direction: column; background: #535353; }
.dock-head { height: 19px; flex: none; background: #424242; border-bottom: 1px solid #3a3a3a; display: flex; justify-content: space-between; padding: 4px 12px 0 40px; }
.dock-body { flex: 1; display: flex; }
.icons { width: 63px; border-right: 1px solid #3f3f3f; padding-left: 1px; }
.group { border-bottom: 2px solid #414141; display: flex; flex-direction: column; align-items: center; padding: 6px 0 2px; }
.group button { width: 46px; height: 46px; }
.group .hgrip { margin-bottom: 4px; }
.group svg { width: 32px; height: 32px; }

.properties { flex: 1; border-left: 4px solid #414141; }
.ptabs { display: flex; height: 44px; background: #424242; }
.ptabs button { font-size: 17px; font-weight: 600; width: 103px; border: solid #383838; border-width: 0 1px 1px 0; color: #a8a8a8; padding-top: 2px; }
.ptabs .active { width: 115px; background: #535353; color: #f4f4f4; border: 0; }
.panel { padding-right: 23px; }
.panel > * { padding-left: 15px; border-bottom: 1px solid #494949; }
.panel > .quick { border: 0; }
.state { height: 56px; padding-top: 17px; }
.doc-sec { height: 223px; padding-top: 17px; }
.field { display: flex; align-items: center; height: 34px; }
.field label { width: 114px; text-align: right; margin-right: 10px; }
.units { margin-top: 17px; }
.ab { margin-top: 13px; }
.select { display: grid; width: 136px; height: 34px; border: 1px solid #5f5f5f; border-radius: 3px; background: #494949; }
.select select, .select svg { grid-area: 1 / 1; }
.select select { appearance: none; padding: 0 10px; font-weight: 600; color: #f2f2f2; width: 100%; }
.select svg { place-self: center end; margin-right: 8px; pointer-events: none; color: #e4e4e4; }
.pcombo { width: 136px; height: 34px; color: #f0f0f0; }
.pcombo input { padding-bottom: 4px; font-size: 17px; }
.pcombo button { color: #e4e4e4; }
.step { margin-left: 24px; }
.btn.edit { width: 170px; margin: 13px 0 0 124px; }
.row { height: 62px; display: flex; align-items: center; gap: 14px; padding-top: 2px; }
.row h2 { width: 129px; }
.row button { width: 35px; height: 37px; border-radius: 3px; }
.row button.on { background: #303030; }
.row svg { width: 28px; height: 28px; overflow: visible; }
.pref-sec { height: 233px; padding-top: 17px; }
.increment { display: flex; align-items: center; margin: 12px 0; height: 34px; }
.increment label { width: 175px; padding-top: 6px; }
.increment input { width: 97px; height: 34px; background: #434343; border: 1px solid #4c4c4c; border-radius: 3px; padding: 0 7px 4px; font-size: 17px; font-weight: 600; color: #f2f2f2; }
.check { display: flex; align-items: center; gap: 9px; height: 39px; }
.check input { appearance: none; flex: none; width: 20px; height: 20px; margin: 0 0 4px 2px; border: 2px solid #b8b8b8; border-radius: 3px; }
.check input:checked { border: 0; background: #c8c8c8; display: grid; place-items: center; }
.check input:checked::after { content: ""; width: 7px; height: 12px; border: solid #3a3a3a; border-width: 0 2px 2px 0; transform: rotate(42deg); margin-bottom: 3px; }
.quick { padding-top: 26px; }
.quick-btns { display: flex; gap: 16px; margin-top: 16px; }
.quick-btns .btn { flex: 192; }
.quick-btns .btn + .btn { flex: 165; }
```
